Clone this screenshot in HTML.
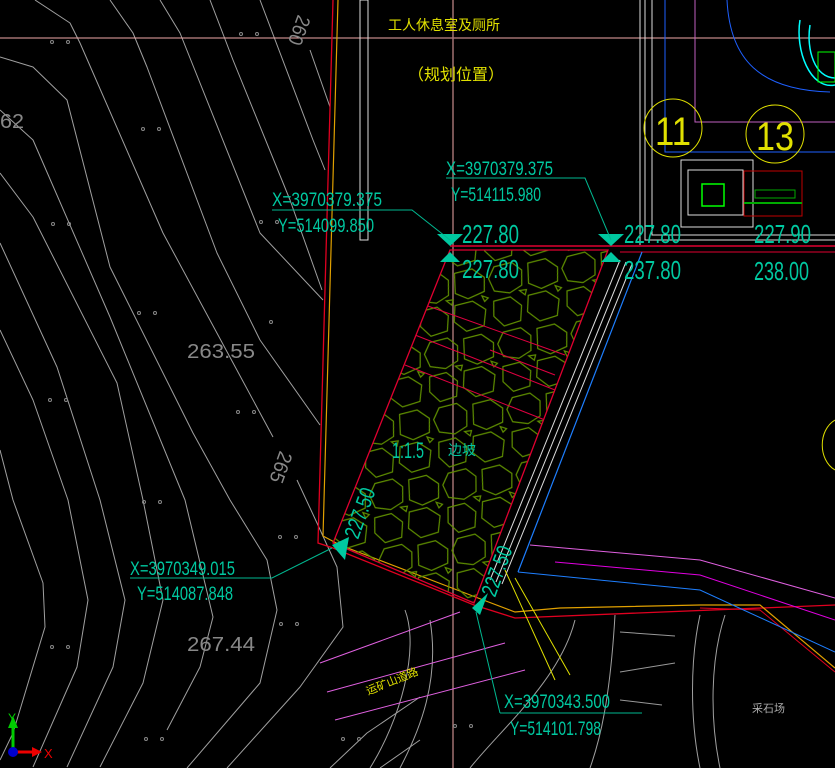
<!DOCTYPE html>
<html><head><meta charset="utf-8"><style>
html,body{margin:0;padding:0;background:#000;overflow:hidden}
svg{display:block}
text{font-family:"Liberation Sans Narrow","Liberation Sans",sans-serif}
</style></head><body>
<svg width="835" height="768" viewBox="0 0 835 768" xmlns="http://www.w3.org/2000/svg">
<defs>
<pattern id="st" width="74" height="66" patternUnits="userSpaceOnUse" patternTransform="rotate(-8)">
<g fill="none" stroke="#5f8f00" stroke-width="1.2">
<path d="M8 3 L26 1 L35 10 L33 25 L20 31 L5 27 L1 14 Z"/>
<path d="M42 4 L60 2 L71 12 L69 26 L52 31 L40 24 Z"/>
<path d="M3 37 L20 35 L30 45 L27 60 L10 63 L1 52 Z"/>
<path d="M38 36 L56 34 L68 44 L64 60 L46 63 L35 52 Z"/>
<path d="M30 30 L37 30 L35 35 Z"/>
<path d="M66 30 L72 33 L68 36 Z"/>
</g>
</pattern>
<clipPath id="cp"><path d="M450 250 L608 250 L474 603 L333 543 Z"/></clipPath>
</defs>
<rect width="835" height="768" fill="#000"/>
<!-- contours -->
<g fill="none" stroke="#a0a0a0" stroke-width="1" stroke-linejoin="round">
<polyline points="0,450 13,500 43,583 45,627 13,733 0,760"/>
<polyline points="0,330 33,400 68,500 88,600 77,667 33,767"/>
<polyline points="0,243 57,367 100,500 125,600 113,667 67,767"/>
<polyline points="0,173 33,217 117,383 143,500 163,600 143,683 100,767"/>
<polyline points="0,110 33,140 110,317 185,500 213,617 200,667 167,730"/>
<polyline points="0,57 33,67 67,100 110,267 193,433 230,500 267,560 277,610 260,683 187,768"/>
<polyline points="35,0 70,23 80,43 163,233 273,437"/>
<polyline points="297,480 317,523 337,567 343,627 300,687 227,768"/>
<polyline points="110,0 133,33 147,67 217,253 260,340 320,425"/>
<polyline points="160,0 180,33 260,233 323,300"/>
<polyline points="210,0 233,60 290,200 322,290"/>
<polyline points="260,0 313,140 325,170"/>
<polyline points="310,50 330,107"/>
<polyline points="420,697 367,733 330,768"/>
<polyline points="420,740 380,768"/>
<path d="M405 610 C420 650 400 720 370 768"/>
<path d="M430 620 C440 680 420 730 400 768"/>
<path d="M575 620 C560 680 500 730 470 768"/>
<path d="M615 615 C610 700 600 740 590 768"/>
<path d="M700 615 C690 660 690 720 700 768"/>
<path d="M725 615 C710 660 710 720 720 768"/>
<g stroke="#999"><line x1="620" y1="632" x2="675" y2="636"/><line x1="620" y1="672" x2="675" y2="663"/><line x1="620" y1="700" x2="662" y2="705"/></g>
</g>
<!-- grid lines -->
<line x1="0" y1="38" x2="835" y2="38" stroke="#f0a8a8" stroke-width="1"/>
<line x1="453" y1="0" x2="453" y2="768" stroke="#a07070" stroke-width="1.5"/>
<!-- boundaries -->
<path d="M333 0 L318 543 L333 548 L474 605 L515 618 L835 605" fill="none" stroke="#e00020" stroke-width="1.3"/>
<path d="M338 0 L323 536 L340 545 L478 598 L515 612 L560 608 L700 605 L760 605 L835 668" fill="none" stroke="#e0a000" stroke-width="1.2"/>
<path d="M700 608 L760 610 L835 672" fill="none" stroke="#e00020" stroke-width="1"/>
<rect x="360" y="0" width="8" height="240" fill="none" stroke="#ddd" stroke-width="1"/>
<!-- slope -->
<g clip-path="url(#cp)"><rect x="300" y="220" width="340" height="420" fill="url(#st)"/>
<g stroke="#e00040" stroke-width="1"><line x1="425" y1="305" x2="565" y2="355"/><line x1="415" y1="335" x2="555" y2="390"/><line x1="405" y1="365" x2="545" y2="420"/><line x1="490" y1="350" x2="555" y2="375"/></g></g>
<path d="M450 250 L608 250 L474 603 L333 543 Z" fill="none" stroke="#e00030" stroke-width="1.3"/>
<line x1="450" y1="246" x2="835" y2="246" stroke="#e00030" stroke-width="1.5"/>
<line x1="620" y1="252" x2="835" y2="252" stroke="#e00030" stroke-width="1"/>
<g stroke="#ddd" stroke-width="1"><line x1="620" y1="260" x2="490" y2="580"/><line x1="626" y1="262" x2="496" y2="582"/><line x1="632" y1="264" x2="502" y2="584"/></g>
<line x1="642" y1="252" x2="518" y2="572" stroke="#1e7fff" stroke-width="1.2"/>
<path d="M518 572 L700 590 L835 652" fill="none" stroke="#1e7fff" stroke-width="1"/>
<path d="M530 545 L700 560 L835 598" fill="none" stroke="#e060e0" stroke-width="1"/>
<path d="M555 562 L700 575 L835 620" fill="none" stroke="#e000e0" stroke-width="1"/>
<g stroke="#e060e0" stroke-width="1"><line x1="320" y1="663" x2="460" y2="612"/><line x1="327" y1="692" x2="505" y2="643"/><line x1="335" y1="720" x2="525" y2="670"/></g>
<g stroke="#e0e000" stroke-width="1" fill="none"><path d="M505 570 L555 680"/><path d="M515 578 L570 675"/></g>
<!-- top right block -->
<g fill="none" stroke="#ddd" stroke-width="1"><path d="M640 0 V245"/><path d="M645 0 V240 H835"/><path d="M652 0 V235 H835"/></g>
<path d="M665 0 V152 H835" fill="none" stroke="#1e60ff" stroke-width="1"/>
<path d="M695 0 V122 H835" fill="none" stroke="#c060c0" stroke-width="1"/>
<path d="M727 0 C730 60 760 90 830 92" fill="none" stroke="#1e60ff" stroke-width="1"/>
<circle cx="673" cy="128" r="29" fill="none" stroke="#e0e000"/>
<circle cx="775" cy="134" r="29" fill="none" stroke="#e0e000"/>
<text x="673" y="145" font-size="40" fill="#e0e000" text-anchor="middle" textLength="36" lengthAdjust="spacingAndGlyphs">11</text>
<text x="775" y="150" font-size="40" fill="#e0e000" text-anchor="middle" textLength="38" lengthAdjust="spacingAndGlyphs">13</text>
<path d="M681 160 H753 V227 H681 Z M688 170 H743 V215 H688 Z" fill="none" stroke="#ddd"/>
<rect x="702" y="184" width="22" height="22" fill="none" stroke="#0f0" stroke-width="1.5"/>
<rect x="744" y="171" width="58" height="45" fill="none" stroke="#c00000"/>
<line x1="744" y1="203" x2="802" y2="203" stroke="#0a0" stroke-width="2"/>
<rect x="755" y="190" width="40" height="8" fill="none" stroke="#0a0"/>
<path d="M800 20 C795 50 810 90 835 85 M810 25 C806 50 815 78 835 78" fill="none" stroke="#0ff" stroke-width="1.5"/>
<rect x="818" y="52" width="17" height="30" fill="none" stroke="#0f0"/>
<path d="M835 420 C818 430 818 460 835 470" fill="none" stroke="#e0e000"/>
<!-- markers -->
<g fill="#00c8a0">
<path d="M437 234 H463 L450 246 Z"/><path d="M440 262 H460 L450 252 Z"/>
<path d="M598 234 H624 L611 246 Z"/><path d="M601 262 H621 L611 252 Z"/>
<path d="M332 545 L349 537 L345 560 Z"/><path d="M472 608 L488 593 L480 615 Z"/>
</g>
<g stroke="#00b890" stroke-width="1" fill="none">
<path d="M272 210 H412 L450 240"/><path d="M446 178 H585 L611 240"/>
<path d="M130 578 H272 L332 548"/><path d="M500 713 H642"/><path d="M476 612 L500 713"/>
</g>
<g fill="#00c8a0" font-size="19">
<text x="272" y="206" textLength="110" lengthAdjust="spacingAndGlyphs">X=3970379.375</text>
<text x="278" y="232" textLength="96" lengthAdjust="spacingAndGlyphs">Y=514099.850</text>
<text x="446" y="175" textLength="107" lengthAdjust="spacingAndGlyphs">X=3970379.375</text>
<text x="451" y="201" textLength="90" lengthAdjust="spacingAndGlyphs">Y=514115.980</text>
<text x="130" y="575" textLength="105" lengthAdjust="spacingAndGlyphs">X=3970349.015</text>
<text x="137" y="600" textLength="96" lengthAdjust="spacingAndGlyphs">Y=514087.848</text>
<text x="504" y="708" textLength="106" lengthAdjust="spacingAndGlyphs">X=3970343.500</text>
<text x="510" y="735" textLength="91" lengthAdjust="spacingAndGlyphs">Y=514101.798</text>
<g font-size="26">
<text x="462" y="243" textLength="57" lengthAdjust="spacingAndGlyphs">227.80</text>
<text x="462" y="278" textLength="57" lengthAdjust="spacingAndGlyphs">227.80</text>
<text x="624" y="243" textLength="57" lengthAdjust="spacingAndGlyphs">227.80</text>
<text x="624" y="279" textLength="57" lengthAdjust="spacingAndGlyphs">237.80</text>
<text x="754" y="243" textLength="57" lengthAdjust="spacingAndGlyphs">227.90</text>
<text x="754" y="280" textLength="55" lengthAdjust="spacingAndGlyphs">238.00</text>
<text x="392" y="458" font-size="22" textLength="32" lengthAdjust="spacingAndGlyphs">1:1.5</text>
<text x="0" y="0" transform="translate(358,540) rotate(-70)" font-size="22" textLength="52" lengthAdjust="spacingAndGlyphs">227.50</text>
<text x="0" y="0" transform="translate(495,598) rotate(-70)" font-size="22" textLength="52" lengthAdjust="spacingAndGlyphs">227.50</text>
</g>
<text x="448" y="455" font-size="14" font-family="Noto Sans CJK SC,sans-serif">边坡</text>
</g>
<g fill="#888" font-size="20">
<text x="187" y="358" textLength="68" lengthAdjust="spacingAndGlyphs">263.55</text>
<text x="187" y="651" textLength="68" lengthAdjust="spacingAndGlyphs">267.44</text>
<text x="0" y="128" textLength="24" lengthAdjust="spacingAndGlyphs">62</text>
<text x="0" y="0" transform="translate(298,14) rotate(110)" textLength="30" lengthAdjust="spacingAndGlyphs">260</text>
<text x="0" y="0" transform="translate(280,450) rotate(110)" textLength="32" lengthAdjust="spacingAndGlyphs">265</text>
</g>
<g fill="#e0e000" font-family="Noto Sans CJK SC,sans-serif">
<text x="388" y="30" font-size="14">工人休息室及厕所</text>
<text x="408" y="80" font-size="16">（规划位置）</text>
<text x="0" y="0" transform="translate(368,695) rotate(-22)" font-size="11">运矿山道路</text>
</g>
<text x="752" y="712" font-size="11" fill="#aaa" font-family="Noto Sans CJK SC,sans-serif">采石场</text>
<g fill="none" stroke="#888"><circle cx="52" cy="42" r="1.5"/><circle cx="68" cy="42" r="1.5"/><circle cx="241" cy="34" r="1.5"/><circle cx="257" cy="34" r="1.5"/><circle cx="143" cy="129" r="1.5"/><circle cx="159" cy="129" r="1.5"/><circle cx="53" cy="224" r="1.5"/><circle cx="69" cy="224" r="1.5"/><circle cx="261" cy="222" r="1.5"/><circle cx="277" cy="222" r="1.5"/><circle cx="139" cy="313" r="1.5"/><circle cx="155" cy="313" r="1.5"/><circle cx="271" cy="322" r="1.5"/><circle cx="50" cy="400" r="1.5"/><circle cx="66" cy="400" r="1.5"/><circle cx="238" cy="412" r="1.5"/><circle cx="254" cy="412" r="1.5"/><circle cx="144" cy="502" r="1.5"/><circle cx="160" cy="502" r="1.5"/><circle cx="52" cy="647" r="1.5"/><circle cx="68" cy="647" r="1.5"/><circle cx="281" cy="624" r="1.5"/><circle cx="297" cy="624" r="1.5"/><circle cx="146" cy="739" r="1.5"/><circle cx="162" cy="739" r="1.5"/><circle cx="343" cy="739" r="1.5"/><circle cx="359" cy="739" r="1.5"/><circle cx="455" cy="726" r="1.5"/><circle cx="471" cy="726" r="1.5"/><circle cx="280" cy="537" r="1.5"/><circle cx="296" cy="537" r="1.5"/></g>
<!-- UCS -->
<line x1="13" y1="748" x2="13" y2="723" stroke="#0c0" stroke-width="3"/><path d="M8 728 L13 716 L18 728 Z" fill="#0c0"/>
<line x1="13" y1="752" x2="36" y2="752" stroke="#e00" stroke-width="3"/><path d="M32 747 L42 752 L32 757 Z" fill="#e00"/>
<circle cx="13" cy="752" r="5" fill="#00c"/>
<text x="8" y="722" font-size="12" fill="#0c0">Y</text><text x="44" y="758" font-size="13" fill="#e00">X</text>
</svg>
</body></html>
